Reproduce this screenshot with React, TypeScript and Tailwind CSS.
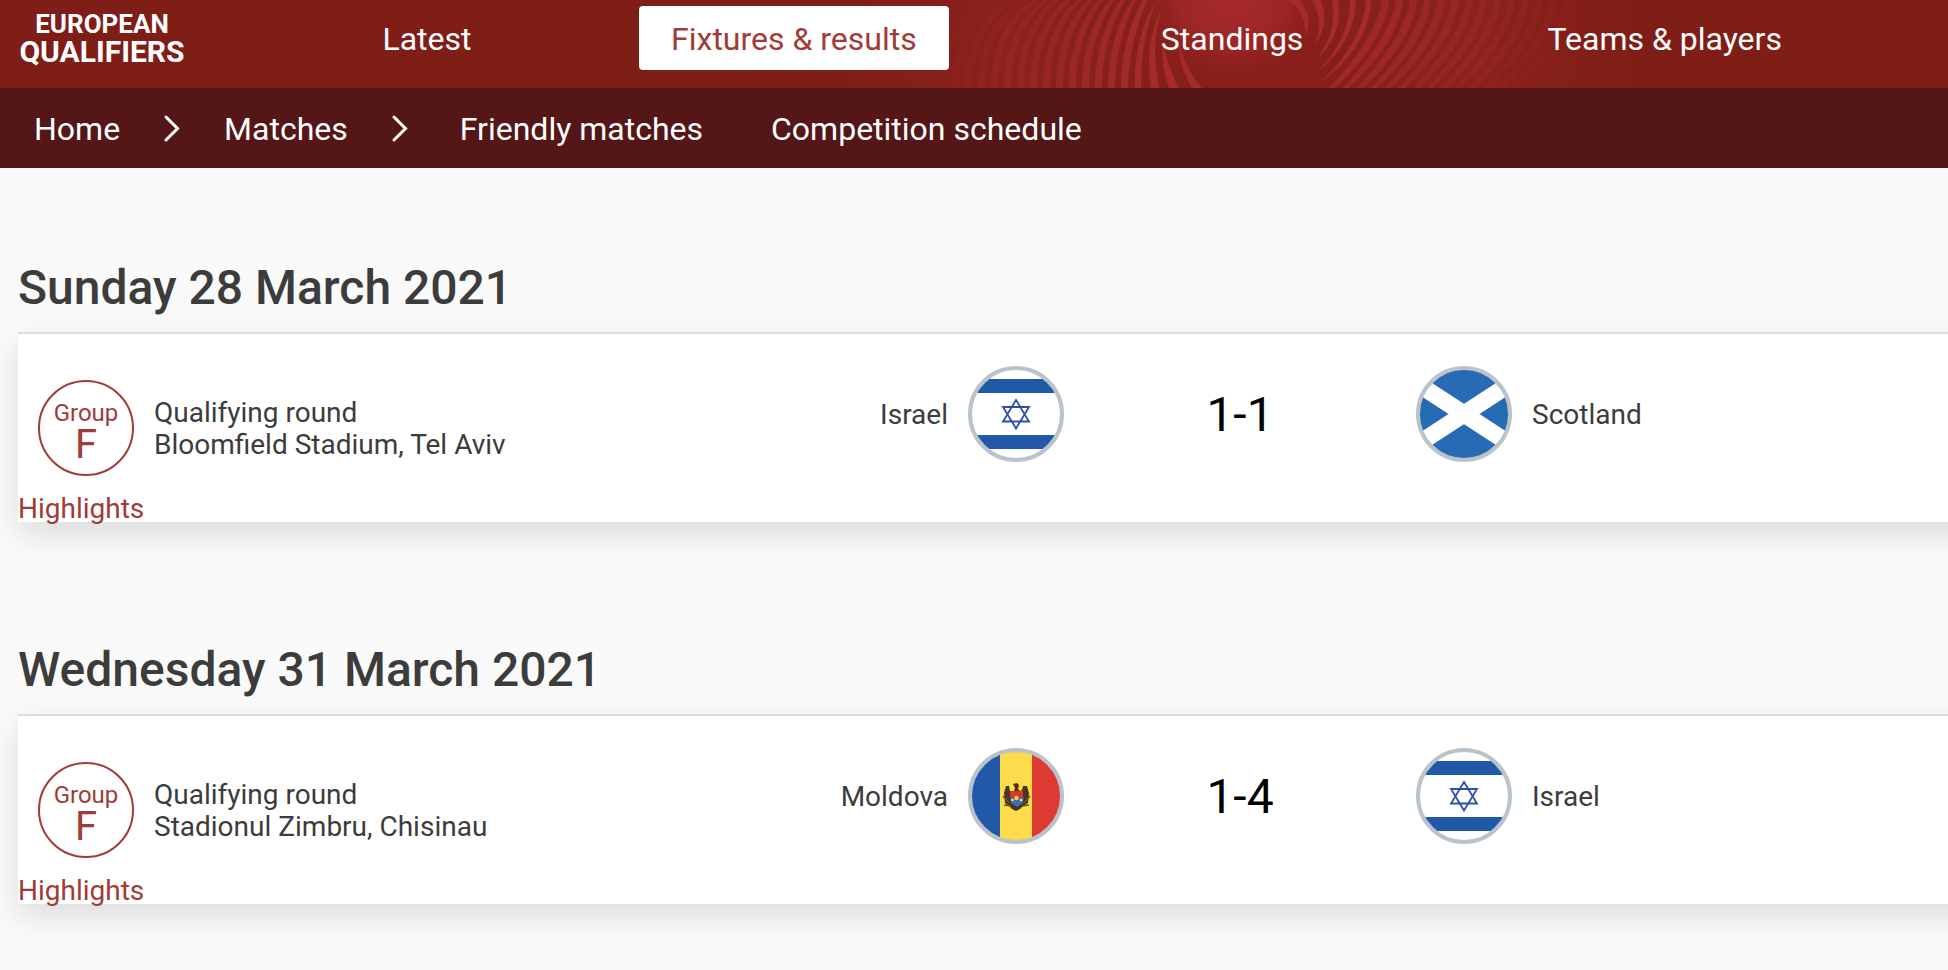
type Team = "Israel" | "Scotland" | "Moldova"

interface Match {
  date: string
  group: string
  venue: string
  home: Team
  away: Team
  score: string
}

const matches: Match[] = [
  {
    date: "Sunday 28 March 2021",
    group: "F",
    venue: "Bloomfield Stadium, Tel Aviv",
    home: "Israel",
    away: "Scotland",
    score: "1-1",
  },
  {
    date: "Wednesday 31 March 2021",
    group: "F",
    venue: "Stadionul Zimbru, Chisinau",
    home: "Moldova",
    away: "Israel",
    score: "1-4",
  },
]

// Evenly spaced arcs, fading out away from the centre of the banner
const leftArcs = Array.from({ length: 15 }, (_, i) => {
  const x = 1124 - i * 13
  const top = x + 19 + i * 2
  return {
    d: `M${x - 3} 88C${x - 3} 56 ${x + 6} 22 ${top} 0h4C${x + 13} 24 ${x + 4} 56 ${x + 4} 88Z`,
    opacity: 0.9 - i * 0.06,
  }
})

const rightArcs = Array.from({ length: 15 }, (_, i) => {
  const top = 1382 + i * 14
  const bottom = 1329 + i * 14
  return {
    d: `M${top} 0C${top - 5} 34 ${bottom + 20} 66 ${bottom} 88h6C${bottom + 29} 66 ${top + 3} 36 ${top + 7} 0Z`,
    opacity: 0.8 - i * 0.052,
  }
})

const innerArcs = [
  "M1135 88C1134 56 1142 22 1156 2C1146 26 1141 56 1141 88Z",
  "M1151 88C1147 56 1149 34 1162 8C1154 34 1153 58 1159 88Z",
  "M1169 88C1163 70 1161 58 1163 40C1166 60 1172 74 1179 88Z",
  "M1192 88C1184 74 1179 62 1179 44C1184 62 1192 76 1202 88Z",
  "M1288 0C1299 6 1305 18 1306 36C1311 22 1309 8 1298 0Z",
  "M1312 0C1320 14 1321 28 1315 45C1326 30 1327 14 1320 0Z",
  "M1332 0C1336 20 1331 40 1317 59C1337 40 1341 22 1338 0Z",
  "M1350 0C1350 26 1339 50 1317 72C1343 52 1355 28 1356 0Z",
  "M1366 0C1364 30 1346 60 1317 85C1352 60 1370 32 1371 0Z",
]

function BannerPattern() {
  return (
    <svg
      className="absolute inset-0 h-full w-full"
      viewBox="0 0 1948 88"
      preserveAspectRatio="xMidYMid slice"
      aria-hidden="true"
    >
      <defs>
        <radialGradient id="wide" gradientUnits="userSpaceOnUse" cx="1240" cy="30" r="400">
          <stop offset="0" stopColor="#841d19" />
          <stop offset="0.6" stopColor="#8a211d" />
          <stop offset="1" stopColor="#8a211d" stopOpacity="0" />
        </radialGradient>
        <radialGradient
          id="core"
          gradientUnits="userSpaceOnUse"
          cx="0"
          cy="0"
          r="1"
          gradientTransform="translate(1232 0) scale(104 88)"
        >
          <stop offset="0" stopColor="#a72b2a" />
          <stop offset="0.5" stopColor="#a02725" stopOpacity="0.9" />
          <stop offset="1" stopColor="#8a1f1b" stopOpacity="0" />
        </radialGradient>
      </defs>
      <rect x="800" width="900" height="88" fill="url(#wide)" />
      <rect x="1120" width="230" height="88" fill="url(#core)" />
      <g fill="#a52b2a">
        {leftArcs.map((arc) => (
          <path key={arc.d} d={arc.d} opacity={arc.opacity} />
        ))}
        {innerArcs.map((d) => (
          <path key={d} d={d} />
        ))}
        {rightArcs.map((arc) => (
          <path key={arc.d} d={arc.d} opacity={arc.opacity} />
        ))}
      </g>
    </svg>
  )
}

function Flag({ team }: { team: Team }) {
  const clip = `clip-${team}`
  return (
    <svg className="h-24 w-24 shrink-0" viewBox="0 0 96 96" aria-hidden="true">
      <clipPath id={clip}>
        <circle cx="48" cy="48" r="45" />
      </clipPath>
      <g clipPath={`url(#${clip})`}>
        {team === "Israel" && (
          <>
            <rect width="96" height="96" fill="#fff" />
            <rect y="13" width="96" height="14" fill="#2158a8" />
            <rect y="69" width="96" height="14" fill="#2158a8" />
            <path
              d="M48 34L61 55.5H35ZM48 62.5L35 41H61Z"
              fill="none"
              stroke="#2d50a5"
              strokeWidth="1.8"
            />
          </>
        )}
        {team === "Scotland" && (
          <>
            <rect width="96" height="96" fill="#286bb5" />
            <path d="M-4 14L100 82M-4 82L100 14" stroke="#fff" strokeWidth="17" />
          </>
        )}
        {team === "Moldova" && (
          <>
            <rect width="96" height="96" fill="#fbdc4b" />
            <rect width="32" height="96" fill="#2158a8" />
            <rect x="64" width="32" height="96" fill="#dc3a32" />
            <path
              d="M45 36l4-1 2 2-1 4 2 2 2-1 1-4 4 0 2 7-1 10-6 4-2 2-4 2-4-2-2-2-5-4-1-10 2-7 3 0 1 5 4 0 1-3Z"
              fill="#4f3320"
            />
            <path d="M42 43h13v6l-6 4-7-4Z" fill="#d3392c" />
            <path d="M42 49l7 3 7-3-1 6-6 4-6-4Z" fill="#3c6fb0" />
            <circle cx="48.5" cy="50" r="2.2" fill="#f4d04a" />
            <circle cx="44.5" cy="52" r="1.3" fill="#e9e3c0" />
            <circle cx="53" cy="52" r="1.3" fill="#e9e3c0" />
            <path d="M35 48l6 7M62 48l-6 7M36 57l7 1M61 57l-7 1" stroke="#5e5b2a" strokeWidth="1.5" />
          </>
        )}
      </g>
      <circle cx="48" cy="48" r="46" fill="none" stroke="#bac3c9" strokeWidth="4" />
    </svg>
  )
}

function Chevron() {
  return (
    <svg className="h-8 w-8 shrink-0" viewBox="0 0 32 32" fill="none" aria-hidden="true">
      <path d="M10 4L21.5 15.5L10 27" stroke="#fff" strokeWidth="3" strokeLinecap="round" />
    </svg>
  )
}

function Header() {
  return (
    <header className="relative bg-[#7f1d17] text-white">
      <BannerPattern />
      <div className="relative flex h-[88px] items-start pt-1.5 pr-11">
        <a href="#" className="w-[204px] shrink-0 pt-1 text-center font-bold leading-7">
          <span className="block text-[26px]">EUROPEAN</span>
          <span className="block text-[30px]">QUALIFIERS</span>
        </a>
        <nav className="flex flex-auto pl-[101px] text-[32px] leading-[62px]">
          <div className="flex w-[244px] shrink-0 justify-center">
            <a href="#" className="pt-0.5">
              Latest
            </a>
          </div>
          <div className="flex flex-auto justify-center">
            <a href="#" className="rounded bg-white px-8 pt-0.5 text-[#a23a36]" aria-current="page">
              Fixtures &amp; results
            </a>
          </div>
          <div className="flex flex-auto justify-center">
            <a href="#" className="px-8 pt-0.5">
              Standings
            </a>
          </div>
          <div className="flex flex-auto justify-center">
            <a href="#" className="px-8 pt-0.5">
              Teams &amp; players
            </a>
          </div>
        </nav>
      </div>
    </header>
  )
}

function SubNav() {
  return (
    <nav className="flex h-20 items-center bg-[#541616] pt-0.5 pl-[34px] text-[32px] text-white">
      <a href="#">Home</a>
      <div className="px-9">
        <Chevron />
      </div>
      <a href="#">Matches</a>
      <div className="px-9">
        <Chevron />
      </div>
      <a href="#" className="pr-8 pl-2">
        Friendly matches
      </a>
      <a href="#" className="px-9">
        Competition schedule
      </a>
    </nav>
  )
}

function MatchCard({ match }: { match: Match }) {
  return (
    <section>
      <h2 className="text-[48px] font-medium leading-[56px]">{match.date}</h2>
      {/* the card runs off the right edge of the page */}
      <article className="mt-4 -mr-10 border-t-2 border-[#dcdcdc] bg-white pr-10 shadow-[0_12px_30px_rgba(0,0,0,0.12)]">
        <div className="grid grid-cols-[514fr_532fr_352fr_532fr] pt-8 text-[28px] leading-8">
          <div className="flex items-start pt-3.5 pl-5">
            <div className="flex h-24 w-24 shrink-0 flex-col items-center rounded-full border-2 border-[#a23a36] pt-[19px] text-[#a23a36]">
              <span className="text-[24px] leading-6">Group</span>
              <span className="text-[40px] leading-10">{match.group}</span>
            </div>
            <div className="pt-[17px] pl-5 whitespace-nowrap">
              <p>Qualifying round</p>
              <p>{match.venue}</p>
            </div>
          </div>
          <div className="flex h-24 items-center justify-end gap-5">
            <span className="pt-0.5">{match.home}</span>
            <Flag team={match.home} />
          </div>
          <div className="flex h-24 items-center justify-center pt-0.5 text-[48px] text-black">
            {match.score}
          </div>
          <div className="flex h-24 items-center gap-5">
            <Flag team={match.away} />
            <span className="pt-0.5">{match.away}</span>
          </div>
        </div>
        <a href="#" className="mt-5 block w-fit text-[28px] leading-[26px] text-[#a23a36]">
          Highlights
        </a>
      </article>
    </section>
  )
}

export default function App() {
  return (
    <div className="min-h-screen overflow-hidden bg-[#fafafa] font-[Roboto,sans-serif] text-[#3c3c3c]">
      <Header />
      <SubNav />
      <main className="flex flex-col gap-[120px] pt-[92px] pb-16 pl-[18px]">
        {matches.map((match) => (
          <MatchCard key={match.date} match={match} />
        ))}
      </main>
    </div>
  )
}
